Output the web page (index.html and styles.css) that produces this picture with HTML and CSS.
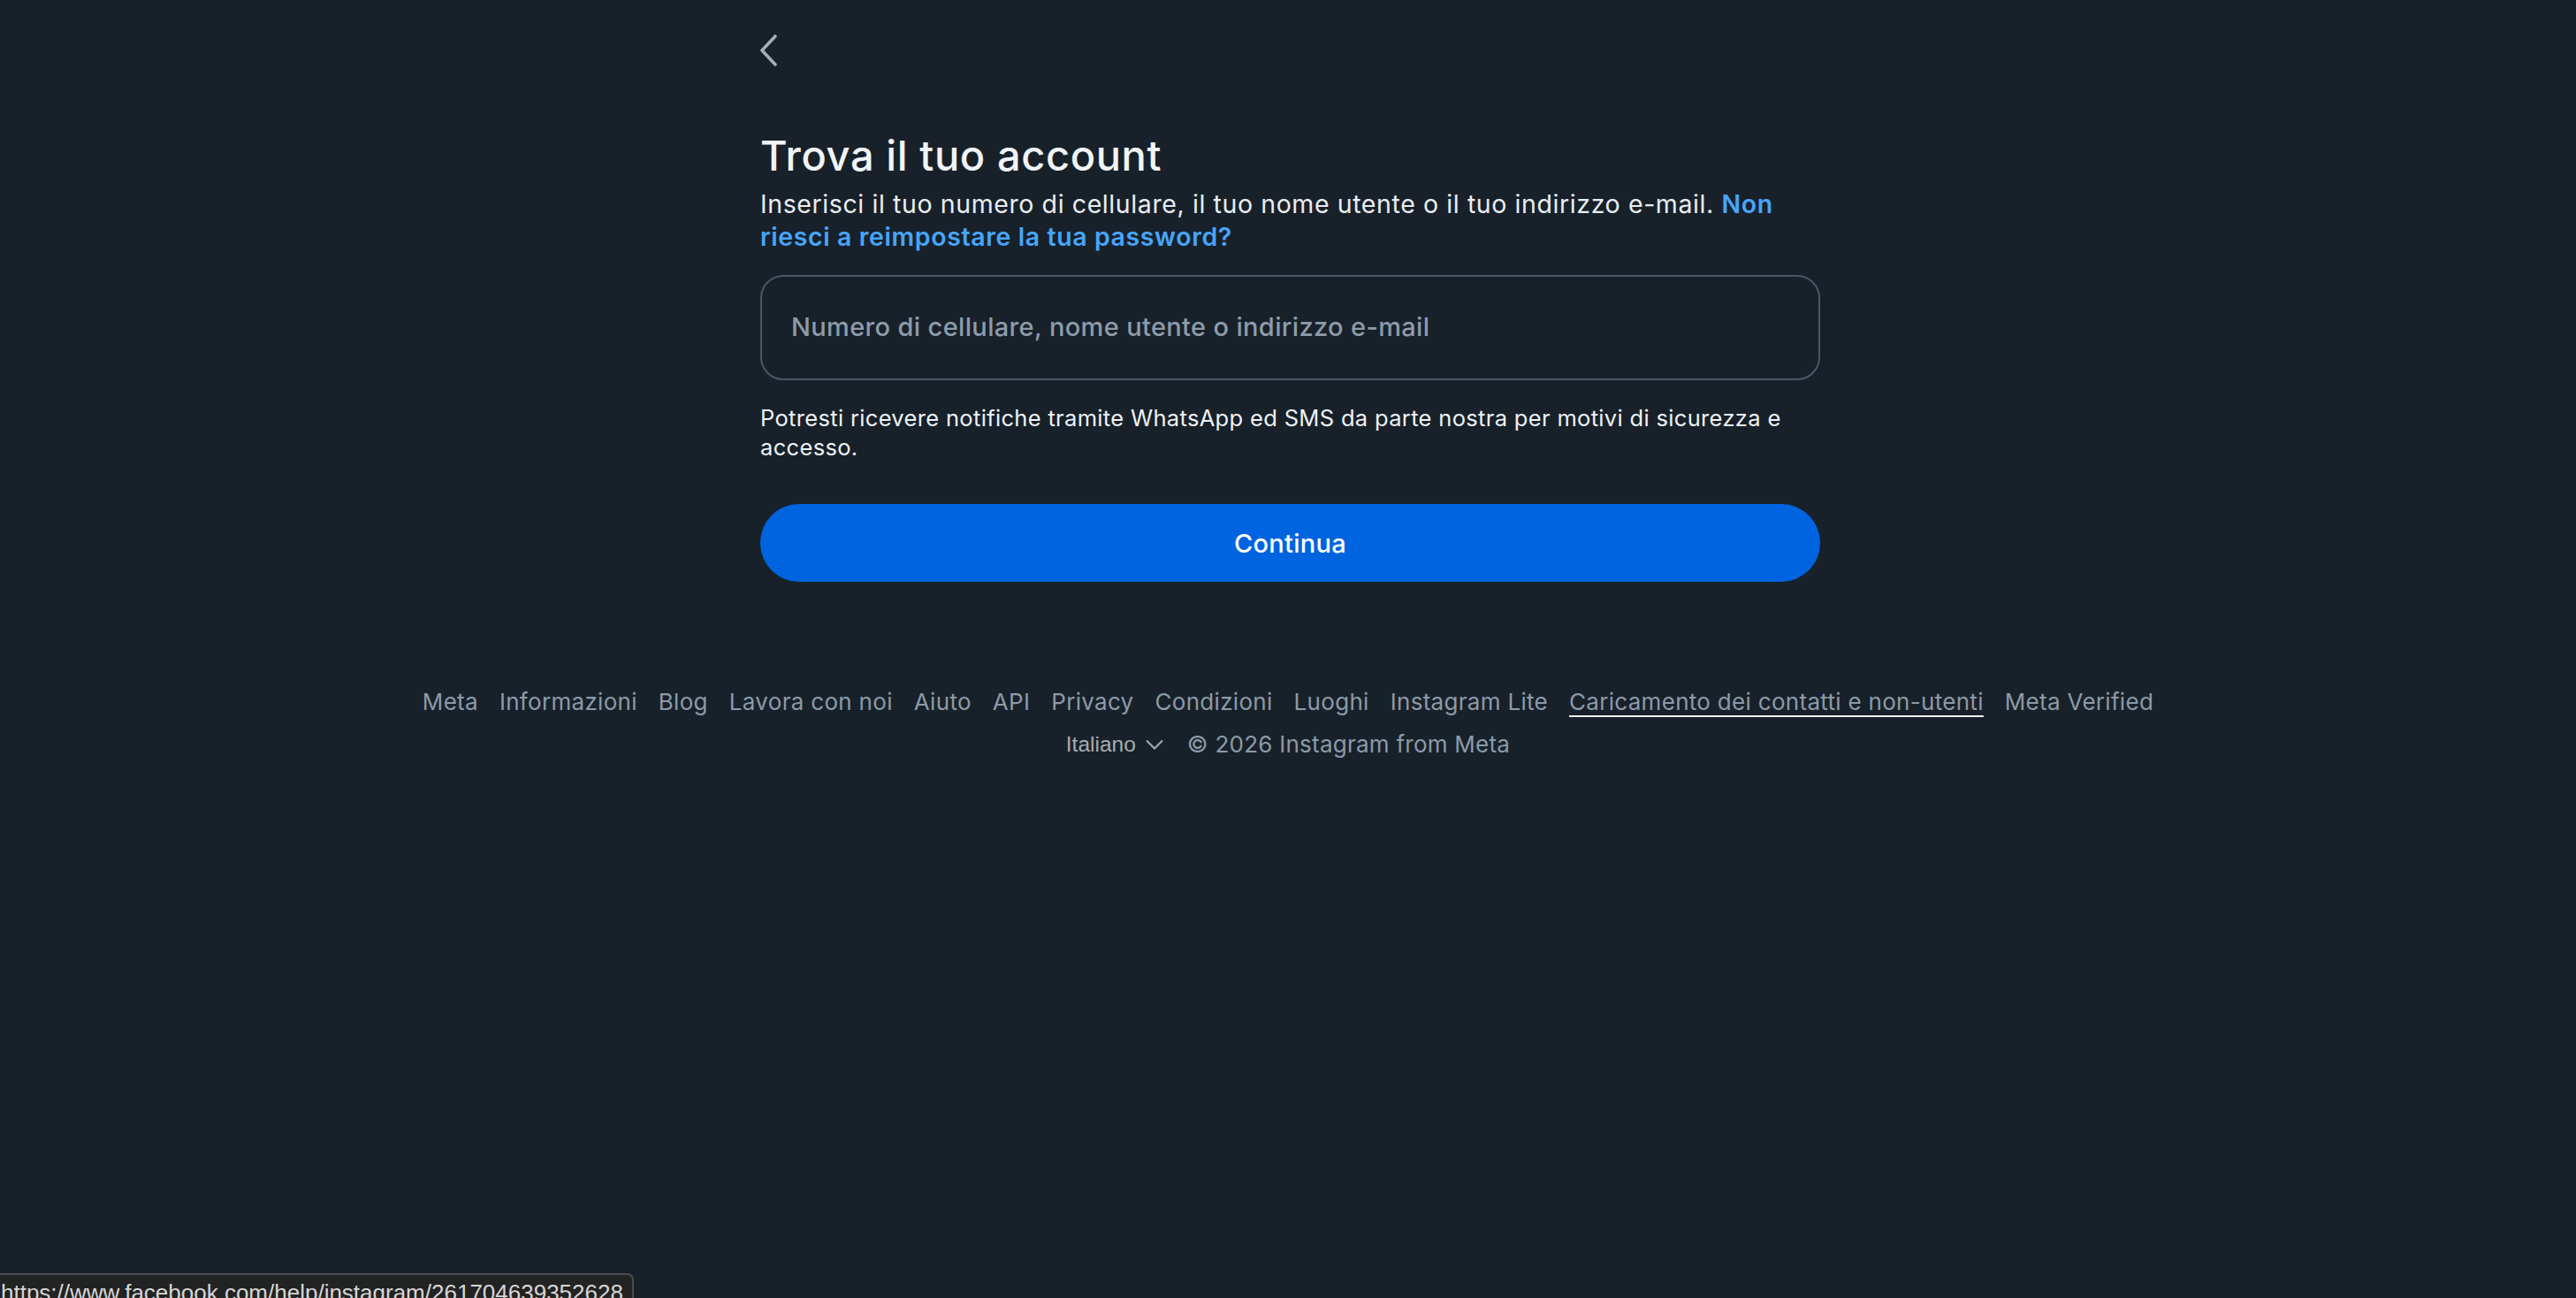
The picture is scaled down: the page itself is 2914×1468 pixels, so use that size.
FILE: index.html
```html
<!DOCTYPE html>
<html lang="it">
<head>
<meta charset="utf-8">
<title>Trova il tuo account</title>
<link rel="stylesheet" href="styles.css">
</head>
<body>
<div class="page">
  <main class="column">
    <button class="back" aria-label="Indietro">
      <svg width="22" height="36" viewBox="0 0 22 36"><path d="M18 2 L3 18 L18 34" fill="none" stroke="#a3afbb" stroke-width="3.6" stroke-linecap="round" stroke-linejoin="round"/></svg>
    </button>
    <h1 class="title">Trova il tuo account</h1>
    <p class="lead">Inserisci il tuo numero di cellulare, il tuo nome utente o il tuo indirizzo e-mail. <a class="link" href="#">Non riesci a reimpostare la tua password?</a></p>
    <div class="field"><span class="placeholder">Numero di cellulare, nome utente o indirizzo e-mail</span></div>
    <p class="notice">Potresti ricevere notifiche tramite WhatsApp ed SMS da parte nostra per motivi di sicurezza e accesso.</p>
    <button class="primary">Continua</button>
  </main>
  <footer class="footer">
    <nav class="links">
      <a>Meta</a><a>Informazioni</a><a>Blog</a><a>Lavora con noi</a><a>Aiuto</a><a>API</a><a>Privacy</a><a>Condizioni</a><a>Luoghi</a><a>Instagram Lite</a><a class="underlined">Caricamento dei contatti e non-utenti</a><a>Meta Verified</a>
    </nav>
    <div class="meta-row">
      <span class="lang">Italiano <svg width="22" height="14" viewBox="0 0 22 14"><path d="M2 2.5 L11 11.5 L20 2.5" fill="none" stroke="#a7acb1" stroke-width="2"/></svg></span>
      <span class="copy">© 2026 Instagram from Meta</span>
    </div>
  </footer>
</div>
<div class="statusbar">https://www.facebook.com/help/instagram/261704639352628</div>
</body>
</html>
```
FILE: styles.css
```css
html, body {
  margin: 0;
  padding: 0;
  background: #18212a;
  height: 100%;
  overflow: hidden;
}
body {
  font-family: Inter, "Noto Sans", sans-serif;
  color: #eef2f5;
}
.page {
  display: flex;
  flex-direction: column;
  align-items: center;
}
.column {
  width: 1199px;
  margin-left: 5px;
  display: flex;
  flex-direction: column;
  align-items: flex-start;
  padding-top: 39px;
}
.back {
  background: none;
  border: 0;
  padding: 0;
  margin: 0 0 0 -1px;
  height: 36px;
  cursor: pointer;
  display: flex;
}
.title {
  margin: 73px 0 0;
  font-size: 47px;
  line-height: 56px;
  font-weight: 500;
  letter-spacing: 0.6px;
  color: #f1f4f7;
}
.lead {
  margin: 8px 0 0;
  font-size: 28.5px;
  line-height: 37px;
  font-weight: 400;
  letter-spacing: 0.6px;
  color: #e9edf0;
}
.link {
  color: #47a5fa;
  font-weight: 600;
  text-decoration: none;
}
.field {
  margin-top: 25px;
  box-sizing: border-box;
  width: 100%;
  height: 119px;
  border: 2px solid #485866;
  border-radius: 26px;
  display: flex;
  align-items: center;
  padding-left: 33px;
}
.placeholder {
  font-size: 29px;
  font-weight: 500;
  letter-spacing: 0.35px;
  color: #8d9cab;
  margin-top: -2px;
}
.notice {
  margin: 26px 0 0;
  font-size: 25.5px;
  line-height: 33px;
  letter-spacing: 0.33px;
  color: #eef2f5;
}
.primary {
  margin-top: 48px;
  width: 100%;
  height: 88px;
  border: 0;
  border-radius: 44px;
  background: #0064e0;
  color: #ffffff;
  font-family: Inter, "Noto Sans", sans-serif;
  font-size: 29px;
  font-weight: 500;
  letter-spacing: 0.3px;
  cursor: pointer;
}
.footer {
  margin-top: 121px;
  display: flex;
  flex-direction: column;
  align-items: center;
  gap: 18px;
  color: #8c9aa8;
}
.links {
  display: flex;
  gap: 24px;
  font-size: 26px;
  line-height: 30px;
}
.links a {
  color: #8c9aa8;
  letter-spacing: 0.3px;
}
.links .underlined {
  text-decoration: underline;
  text-decoration-color: #f2f4f6;
  text-underline-offset: 6px;
  text-decoration-thickness: 2px;
}
.meta-row {
  display: flex;
  align-items: center;
  gap: 26px;
  line-height: 30px;
}
.lang {
  font-family: "Liberation Sans", Arial, sans-serif;
  font-size: 24.5px;
  color: #a7acb1;
  display: flex;
  align-items: center;
  gap: 10px;
}
.copy {
  font-size: 26px;
  color: #8c9aa8;
  letter-spacing: 0.25px;
}
.statusbar {
  position: fixed;
  left: 0;
  top: 1440px;
  width: 717px;
  height: 40px;
  box-sizing: border-box;
  background: #222323;
  border-top: 2px solid #4b4c4c;
  border-right: 2px solid #4b4c4c;
  border-top-right-radius: 7px;
  font-family: "Liberation Sans", Arial, sans-serif;
  font-size: 26px;
  line-height: 28px;
  padding: 6px 0 0 1px;
  color: #d6d6d6;
  white-space: nowrap;
  overflow: hidden;
}
```
